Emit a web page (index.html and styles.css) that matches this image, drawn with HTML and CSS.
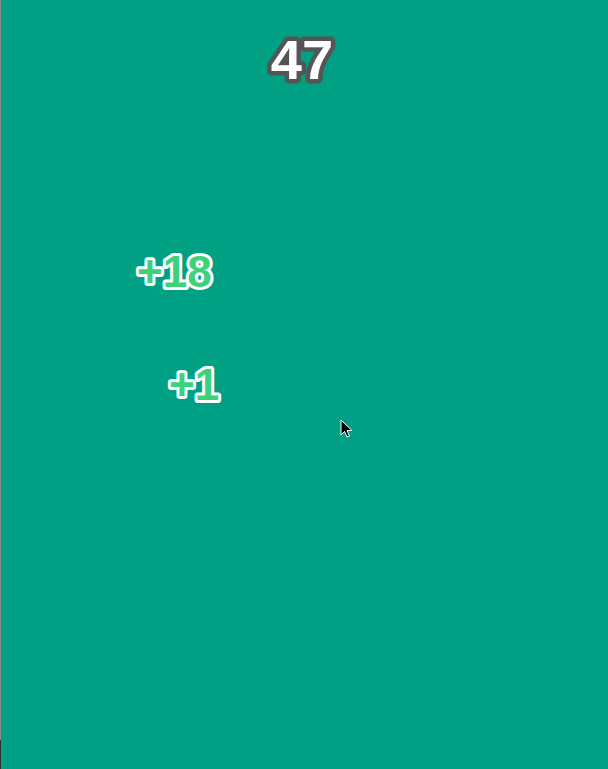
FILE: index.html
```html
<!DOCTYPE html>
<html>
<head>
<meta charset="utf-8">
<link rel="stylesheet" href="styles.css">
</head>
<body>
<div class="game">
  <svg class="score" width="607" height="100" viewBox="0 0 607 100">
    <text x="301" y="79" text-anchor="middle" class="score-text">47</text>
  </svg>
  <svg class="pop pop-a" width="100" height="60" viewBox="0 0 100 60">
    <text x="5" y="47" class="pop-text">+18</text>
  </svg>
  <svg class="pop pop-b" width="80" height="60" viewBox="0 0 80 60">
    <text x="5" y="47" class="pop-text">+1</text>
  </svg>
  <svg class="cursor" width="14" height="20" viewBox="0 0 14 20">
    <path d="M1 1 L1 16 L4.5 12.5 L7 18 L9.5 17 L7 11.5 L12 11.5 Z" fill="#000" stroke="#fff" stroke-width="1" stroke-linejoin="miter"/>
  </svg>
</div>
</body>
</html>
```
FILE: styles.css
```css
html, body {
  margin: 0;
  padding: 0;
}
body {
  width: 608px;
  height: 769px;
  background: #00a085;
  overflow: hidden;
  font-family: "Liberation Sans", Arial, sans-serif;
}
.game {
  position: relative;
  width: 607px;
  height: 769px;
  border-left: 1px solid #8c8c8c;
  background: #00a085;
}
.game::after {
  content: "";
  position: absolute;
  left: -1px;
  bottom: 0;
  width: 1px;
  height: 29px;
  background: #333;
}
.score {
  display: block;
}
.score-text {
  font-family: "Liberation Sans", Arial, sans-serif;
  font-size: 56px;
  font-weight: bold;
  fill: #fff;
  stroke: #555;
  stroke-width: 9px;
  stroke-linejoin: round;
  paint-order: stroke fill;
}
.pop {
  position: absolute;
}
.pop-text {
  font-family: "Liberation Sans", Arial, sans-serif;
  font-size: 44px;
  font-weight: bold;
  fill: #3dd27a;
  stroke: #fff;
  stroke-width: 6px;
  stroke-linejoin: round;
  paint-order: stroke fill;
}
.pop-a {
  left: 131px;
  top: 240px;
}
.pop-b {
  left: 163px;
  top: 353px;
}
.cursor {
  position: absolute;
  left: 339px;
  top: 419px;
}
```
